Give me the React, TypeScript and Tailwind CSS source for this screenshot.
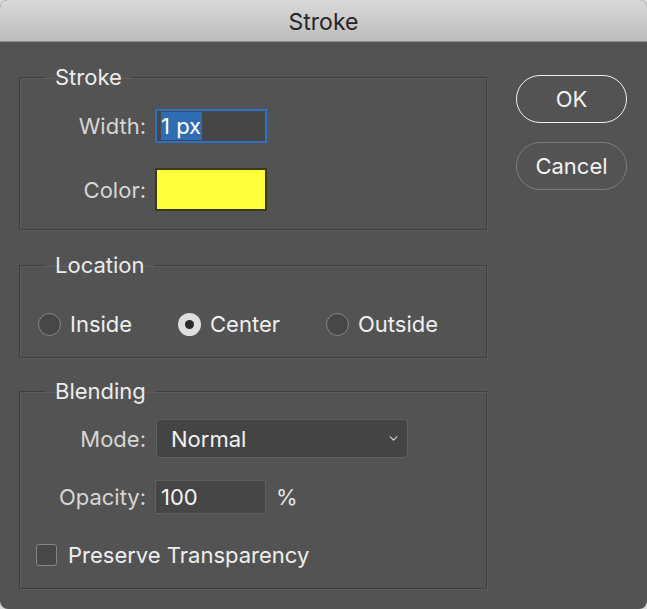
import { ChevronDown } from "lucide-react";

const font = { fontFamily: "Inter, 'Liberation Sans', sans-serif" };

const Group = ({ title, className, children }: { title: string; className?: string; children: React.ReactNode }) => (
  <fieldset className={`border border-[#3f3f3f] shadow-[inset_1px_1px_0_#5c5c5c,1px_1px_0_#5c5c5c] px-0 ${className ?? ""}`}>
    <legend className="ml-[25px] px-[10px] text-[22px] leading-[24px] text-[#ececec]">{title}</legend>
    {children}
  </fieldset>
);

const Label = ({ children }: { children: React.ReactNode }) => (
  <span className="w-[126px] shrink-0 text-right text-[22px] leading-[24px] text-[#d6d6d6]">{children}</span>
);

const Radio = ({ label, checked }: { label: string; checked?: boolean }) => (
  <div className="flex items-center gap-[9px]">
    {checked ? (
      <span className="flex h-[23px] w-[23px] items-center justify-center rounded-full bg-[#dedede]">
        <span className="h-[9px] w-[9px] rounded-full bg-[#2b2b2b]" />
      </span>
    ) : (
      <span className="h-[23px] w-[23px] rounded-full border-[1.5px] border-[#878787] bg-[#474747]" />
    )}
    <span className="text-[22px] leading-[24px] text-[#efefef]">{label}</span>
  </div>
);

export default function App() {
  return (
    <div className="h-[609px] w-[647px] bg-[#d8d8d8]" style={font}>
      <div className="flex h-full w-full flex-col overflow-hidden rounded-[8px] bg-[#535353]">
        <div className="flex h-[42px] shrink-0 items-center justify-center border-b border-[#8f8f8f] bg-gradient-to-b from-[#d9d9d9] to-[#bcbcbc]">
          <span className="pt-[2px] text-[23px] leading-[24px] text-[#262626]">Stroke</span>
        </div>
        <div className="flex pl-[19px] pt-[23px]">
          <div className="flex w-[468px] flex-col">
            <Group title="Stroke" className="pb-[18px]">
              <div className="mt-[20px] flex items-center gap-[9px]">
                <Label>Width:</Label>
                <div className="flex h-[34px] w-[112px] items-center border-2 border-[#2d6ec6] bg-[#464646] pl-[4px]">
                  <span className="bg-[#2f6db3] pr-[1px] text-[22px] leading-[28px] text-white">1 px</span>
                </div>
              </div>
              <div className="mt-[25px] flex items-center gap-[9px]">
                <Label>Color:</Label>
                <div className="h-[43px] w-[112px] border-2 border-[#3a3a16] bg-[#ffff3c]" />
              </div>
            </Group>
            <Group title="Location" className="mt-[23px] pb-[21px]">
              <div className="mt-[35px] flex items-center pl-[18px]">
                <div className="w-[140px]"><Radio label="Inside" /></div>
                <div className="w-[148px]"><Radio label="Center" checked /></div>
                <Radio label="Outside" />
              </div>
            </Group>
            <Group title="Blending" className="mt-[21px] pb-[21px]">
              <div className="mt-[16px] flex items-center gap-[10px]">
                <Label>Mode:</Label>
                <div className="flex h-[39px] w-[252px] items-center justify-between rounded-[4px] border border-[#606060] bg-[#444444] pl-[14px] pr-[7px]">
                  <span className="text-[22px] leading-[24px] text-[#f2f2f2]">Normal</span>
                  <ChevronDown size={13} strokeWidth={2.2} className="text-[#d0d0d0]" />
                </div>
              </div>
              <div className="mt-[22px] flex items-center gap-[9px]">
                <Label>Opacity:</Label>
                <div className="flex h-[34px] w-[111px] items-center border border-[#5e5e5e] bg-[#464646] pl-[5px]">
                  <span className="text-[22px] leading-[24px] text-[#f2f2f2]">100</span>
                </div>
                <span className="ml-[1px] text-[22px] leading-[24px] text-[#e6e6e6]">%</span>
              </div>
              <div className="mt-[29px] flex items-center gap-[11px] pl-[16px]">
                <span className="h-[22px] w-[21px] rounded-[3px] border-[1.5px] border-[#858585] bg-[#484848]" />
                <span className="text-[22px] leading-[24px] text-[#efefef]">Preserve Transparency</span>
              </div>
            </Group>
          </div>
          <div className="ml-[29px] flex flex-col gap-[19px] pt-[10px]">
            <button className="h-[48px] w-[111px] rounded-full border-[1.5px] border-[#f0f0f0] text-[22px] text-[#f2f2f2]">OK</button>
            <button className="h-[48px] w-[111px] rounded-full border-[1.5px] border-[#7c7c7c] text-[22px] text-[#f2f2f2]">Cancel</button>
          </div>
        </div>
      </div>
    </div>
  );
}
